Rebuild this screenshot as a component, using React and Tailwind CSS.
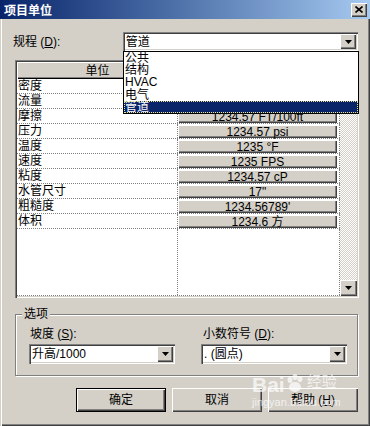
import React from 'react';

const raised = "bg-[#d4d0c8] shadow-[inset_1px_1px_0_#fff,inset_-1px_-1px_0_#404040,inset_-2px_-2px_0_#808080]";
const sunken = "bg-white shadow-[inset_1px_1px_0_#808080,inset_2px_2px_0_#404040,inset_-1px_-1px_0_#fff,inset_-2px_-2px_0_#d4d0c8]";

const rows = [
  ["密度", "1234.57 kg/m³"],
  ["流量", "1234.57 GPM"],
  ["摩擦", "1234.57 FT/100ft"],
  ["压力", "1234.57 psi"],
  ["温度", "1235 °F"],
  ["速度", "1235 FPS"],
  ["粘度", "1234.57 cP"],
  ["水管尺寸", '17"'],
  ["粗糙度", "1234.56789'"],
  ["体积", "1234.6 方"],
];

function Arrow() {
  return (
    <svg width="7" height="4" viewBox="0 0 7 4">
      <polygon points="0,0 7,0 3.5,4" fill="#000" />
    </svg>
  );
}

function Combo({ text, className }) {
  return (
    <div className={`flex items-center p-[2px] ${sunken} ${className}`}>
      <span className="flex-1 pl-[1px] leading-[14px] whitespace-nowrap">{text}</span>
      <div className={`w-[16px] h-full flex items-center justify-center ${raised}`}>
        <Arrow />
      </div>
    </div>
  );
}

function Button({ children, primary }) {
  return (
    <div className={`w-[90px] h-[24px] flex items-center justify-center ${primary ? "outline outline-1 outline-black -outline-offset-1 bg-[#d4d0c8] shadow-[inset_1px_1px_0_#000,inset_2px_2px_0_#fff,inset_-1px_-1px_0_#000,inset_-2px_-2px_0_#404040,inset_-3px_-3px_0_#808080]" : raised}`}>
      {children}
    </div>
  );
}

export default function App() {
  return (
    <div className="w-[370px] h-[426px] bg-[#d4d0c8] relative overflow-hidden text-[12px] text-black font-['Liberation_Sans','Noto_Sans_CJK_SC',sans-serif]">
      {/* title bar */}
      <div className="h-[19px] flex items-center justify-between pl-[4px] pr-[3px] bg-linear-to-r from-[#0a246a] to-[#a6caf0]">
        <span className="text-white font-bold text-[12px] leading-[14px] font-['Noto_Sans_CJK_SC',sans-serif]">项目单位</span>
        <div className={`w-[16px] h-[14px] flex items-center justify-center ${raised}`}>
          <svg width="8" height="7" viewBox="0 0 8 7">
            <path d="M0.5 0.5 L7.5 6.5 M7.5 0.5 L0.5 6.5" stroke="#000" strokeWidth="1.6" />
          </svg>
        </div>
      </div>

      {/* body */}
      <div className="h-[407px] pl-[15px] pr-[12px] flex flex-col shadow-[inset_1px_0_0_#d4d0c8,inset_2px_0_0_#fff,inset_-1px_-1px_0_#404040,inset_-2px_-2px_0_#808080]">
        <div className="flex items-center mt-[13px] -ml-[2px]">
          <span className="w-[110px] leading-[14px]">规程 (<u>D</u>):</span>
          <Combo text="管道" className="w-[236px] h-[19px]" />
        </div>

        {/* grid */}
        <div className={`mt-[9px] w-[344px] h-[238px] p-[2px] flex ${sunken}`}>
          <div className="flex-1 flex flex-col border-b border-dotted border-[#808080]">
            <div className="flex h-[17px] shrink-0">
              <div className={`w-[161px] flex items-center justify-center shadow-[inset_1px_1px_0_#fff,inset_-1px_-1px_0_#000,inset_-2px_-2px_0_#808080] bg-[#d4d0c8]`}>
                <span className="leading-[14px]">单位</span>
              </div>
              <div className="flex-1 bg-[#d4d0c8] shadow-[inset_1px_1px_0_#fff,inset_-1px_-1px_0_#000,inset_-2px_-2px_0_#808080]" />
            </div>
            <div className="flex-1 flex flex-col">
              {rows.map(([label, value]) => (
                <div key={label} className="flex h-[15px] border-b border-dotted border-[#808080]">
                  <div className="w-[161px] border-r border-dotted border-[#808080] pl-[1px] leading-[14px]">{label}</div>
                  <div className="flex-1 pr-[2px] border-r border-dotted border-[#808080] pt-[1px]">
                    <div className={`h-[13px] flex items-center justify-center leading-[12px] whitespace-nowrap ${raised}`}>{value}</div>
                  </div>
                </div>
              ))}
              <div className="flex flex-1">
                <div className="w-[161px] border-r border-dotted border-[#808080]" />
                <div className="flex-1 border-r border-dotted border-[#808080]" />
              </div>
            </div>
          </div>
          <div className="w-[17px] flex flex-col bg-[repeating-conic-gradient(#d4d0c8_0_25%,#fff_0_50%)] bg-[length:2px_2px]">
            <div className={`h-[16px] flex items-center justify-center ${raised}`}>
              <svg width="7" height="4" viewBox="0 0 7 4"><polygon points="0,4 7,4 3.5,0" fill="#000" /></svg>
            </div>
            <div className="flex-1" />
            <div className={`h-[16px] flex items-center justify-center ${raised}`}>
              <Arrow />
            </div>
          </div>
        </div>

        {/* group box */}
        <div className="relative mt-[16px] w-[343px] h-[62px] border border-[#808080] shadow-[inset_1px_1px_0_#fff,1px_1px_0_#fff] pl-[13px] pt-[12px]">
          <span className="absolute -top-[8px] left-[6px] px-[2px] bg-[#d4d0c8] leading-[14px]">选项</span>
          <div className="flex gap-[26px]">
            <div className="flex flex-col">
              <span className="pl-[1px] leading-[14px] mb-[3px]">坡度 (<u>S</u>):</span>
              <Combo text="升高/1000" className="w-[146px] h-[20px]" />
            </div>
            <div className="flex flex-col">
              <span className="pl-[2px] leading-[14px] mb-[3px]">小数符号 (<u>D</u>):</span>
              <Combo text=". (圆点)" className="w-[146px] h-[20px]" />
            </div>
          </div>
        </div>

        {/* buttons */}
        <div className="mt-[12px] flex justify-end gap-[6px]">
          <Button primary>确定</Button>
          <Button>取消</Button>
          <Button>帮助 (<u>H</u>)</Button>
        </div>
      </div>

      {/* watermark */}
      <div className="absolute left-[252px] top-[372px] text-white/70 pointer-events-none">
        <div className="flex items-end">
          <span className="font-bold text-[21px] leading-[22px] font-['Liberation_Sans',sans-serif]">Bai</span>
          <svg width="22" height="20" viewBox="0 0 22 20" className="mb-[2px]">
            <g fill="rgba(255,255,255,0.7)">
              <ellipse cx="5" cy="6" rx="2.5" ry="3" />
              <ellipse cx="10" cy="3" rx="2.5" ry="3" />
              <ellipse cx="15" cy="5" rx="2.5" ry="3" />
              <ellipse cx="10" cy="13" rx="6" ry="5" />
            </g>
          </svg>
          <span className="text-[15px] leading-[18px] mb-[6px] font-['Noto_Sans_CJK_SC',sans-serif]">经验</span>
        </div>
        <div className="text-[11px] leading-[12px] font-['Liberation_Sans',sans-serif]">jingyan.baidu.com</div>
      </div>

      {/* open dropdown list */}
      <div className="absolute left-[123px] top-[51px] w-[236px] h-[63px] bg-white border border-black flex flex-col">
        {["公共", "结构", "HVAC", "电气"].map((t) => (
          <div key={t} className="flex-1 pl-[1px] leading-[12px]">{t}</div>
        ))}
        <div className="flex-1 pl-[1px] leading-[12px] bg-[#0a246a] text-white outline outline-1 outline-dotted outline-[#f0e68c] -outline-offset-1">管道</div>
      </div>
    </div>
  );
}
